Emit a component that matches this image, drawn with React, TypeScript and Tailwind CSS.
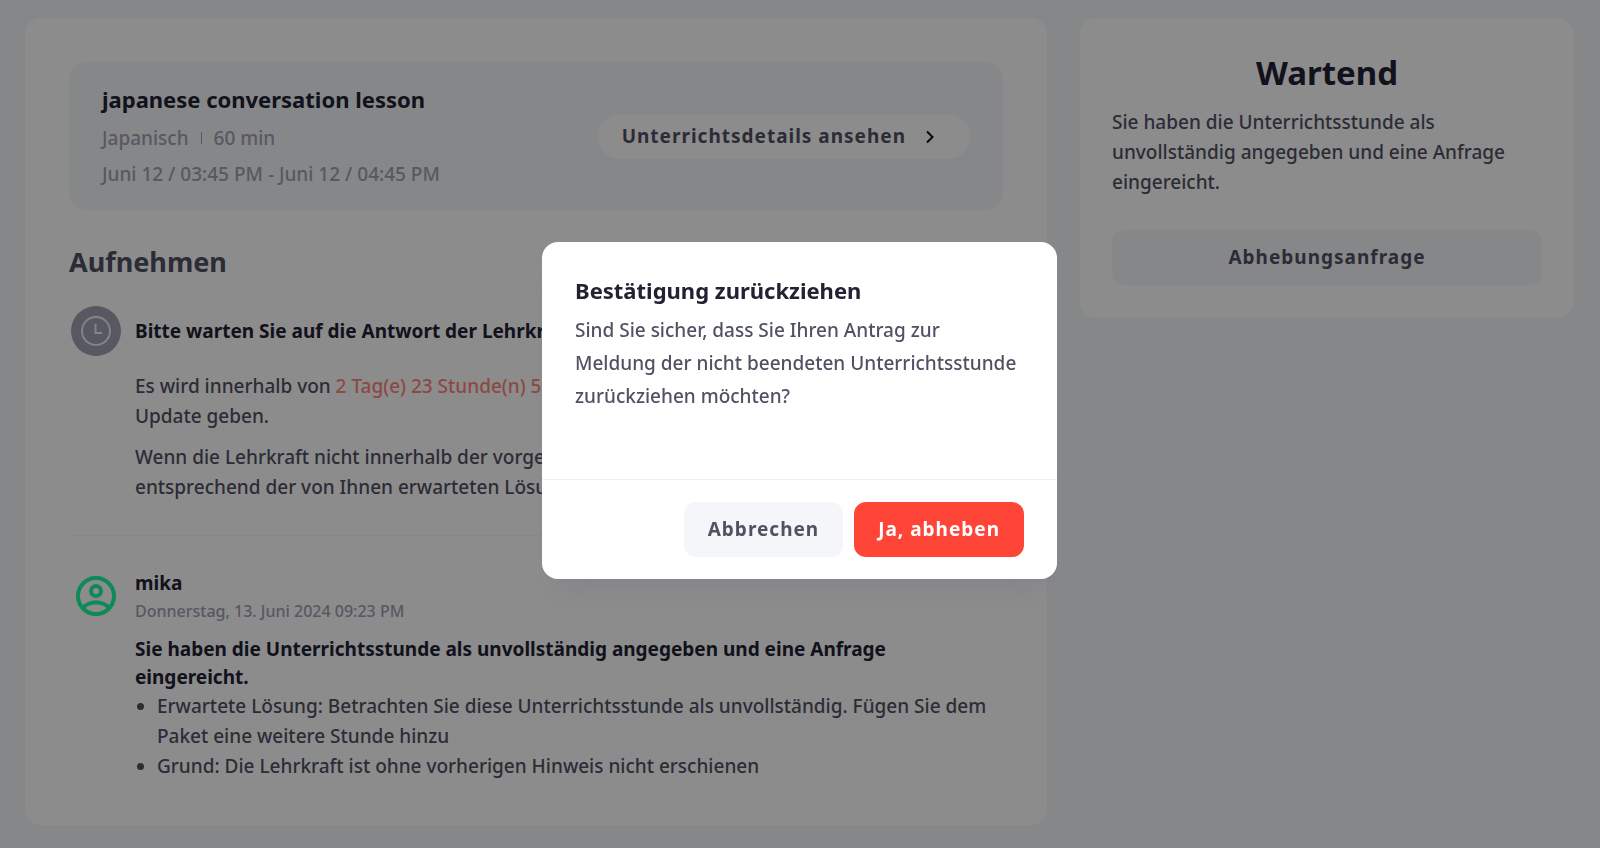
import { useState } from 'react';

const findings = [
  'Erwartete Lösung: Betrachten Sie diese Unterrichtsstunde als unvollständig. Fügen Sie dem Paket eine weitere Stunde hinzu',
  'Grund: Die Lehrkraft ist ohne vorherigen Hinweis nicht erschienen',
];

function ClockBadge() {
  return (
    <svg viewBox="0 0 50 50" className="w-[50px] h-[50px]" fill="none" aria-hidden="true">
      <circle cx="25" cy="25" r="25" fill="#a0a0b2" />
      <circle cx="25" cy="25" r="14" stroke="#f0f0f4" strokeWidth="2" />
      <path d="M24.500 18V27H31" stroke="#f0f0f4" strokeWidth="2" />
    </svg>
  );
}

function UserIcon() {
  return (
    <svg viewBox="0 0 40 40" className="w-10 h-10" fill="none" stroke="#1dfaa0" strokeWidth="4" aria-hidden="true">
      <circle cx="20" cy="20" r="18" />
      <circle cx="20" cy="15" r="5" />
      <path d="M7 31.5C10.500 28 15 26.500 20 26.500S29.500 28 33 31.500" />
    </svg>
  );
}

function ChevronIcon() {
  return (
    <svg viewBox="0 0 24 24" className="w-6 h-6" fill="none" stroke="#101018" strokeWidth="2" aria-hidden="true">
      <path d="M9 6.500L14.500 12L9 17.500" />
    </svg>
  );
}

function LessonCard() {
  return (
    <div className="flex items-center justify-between bg-[#f5f6fa] rounded-2xl px-[33px] pt-[19px] pb-[18px]">
      <div className="text-[#a0a0b2]">
        <h1 className="text-[22px] leading-9 font-bold text-[#222233]">japanese conversation lesson</h1>
        <p className="flex items-center mt-[3px] text-[19px] leading-9 font-medium">
          Japanisch
          <span className="w-px h-3 mx-3 bg-[#a0a0b2]" />
          60 min
        </p>
        <p className="text-[19px] leading-9 font-medium">Juni 12 / 03:45 PM - Juni 12 / 04:45 PM</p>
      </div>
      <button className="flex items-center gap-3 h-11 pl-6 pr-7 bg-white rounded-full text-[19px] font-bold tracking-[1px]">
        Unterrichtsdetails ansehen
        <ChevronIcon />
      </button>
    </div>
  );
}

function StatusCard({ onWithdraw }: { onWithdraw: () => void }) {
  return (
    <aside className="bg-white rounded-2xl px-8 pt-8 pb-[33px]">
      <h2 className="text-[33px] leading-[46px] font-bold text-center text-[#222233]">Wartend</h2>
      <p className="mt-[11px] text-[19px] leading-[30px] font-medium">
        Sie haben die Unterrichtsstunde als unvollständig angegeben und eine Anfrage eingereicht.
      </p>
      <button
        onClick={onWithdraw}
        className="w-full h-[55px] mt-[33px] bg-[#f5f6fa] rounded-xl text-[19px] font-bold tracking-[1px]"
      >
        Abhebungsanfrage
      </button>
    </aside>
  );
}

function ConfirmModal({ onClose }: { onClose: () => void }) {
  return (
    <div className="fixed inset-0 flex justify-center items-start pt-[242px] pr-px bg-black/45">
      <div
        role="dialog"
        aria-modal="true"
        aria-labelledby="confirm-title"
        className="w-[515px] bg-white rounded-2xl shadow-[0_24px_24px_-16px_rgba(100,105,140,0.25)]"
      >
        <div className="px-[33px] pt-[30px] pb-[66px]">
          <h2 id="confirm-title" className="text-[22px] leading-9 font-bold text-[#222233]">
            Bestätigung zurückziehen
          </h2>
          <p className="mt-1.5 text-[19px] leading-[33px] font-medium">
            Sind Sie sicher, dass Sie Ihren Antrag zur Meldung der nicht beendeten Unterrichtsstunde zurückziehen
            möchten?
          </p>
        </div>
        <div className="flex justify-end gap-[11px] px-[33px] py-[22px] border-t border-[#f0f0f2]">
          <button onClick={onClose} className="h-[55px] px-6 bg-[#f5f6fa] rounded-xl text-[19px] font-bold tracking-[1px]">
            Abbrechen
          </button>
          <button
            onClick={onClose}
            className="h-[55px] px-6 bg-[#ff4438] rounded-xl text-[19px] font-bold tracking-[1px] text-white"
          >
            Ja, abheben
          </button>
        </div>
      </div>
    </div>
  );
}

export default function App() {
  const [showModal, setShowModal] = useState(true);

  return (
    <div className="min-h-screen bg-[#f5f6fa] text-[#515164] font-['Noto_Sans',sans-serif]">
      <div className="grid grid-cols-[1022fr_494fr] items-start gap-[33px] pl-[25px] pr-[26px] pt-[18px] pb-6">
        <main className="bg-white rounded-2xl p-11">
          <LessonCard />

          <h2 className="mt-[31px] text-[27px] leading-[42px] font-bold">Aufnehmen</h2>

          {/* Current status */}
          <section className="grid grid-cols-[54px_1fr] gap-x-3 mt-[23px] pb-[33px] border-b border-[#f5f6fa]">
            <div className="flex justify-center">
              <ClockBadge />
            </div>
            <h3 className="self-center text-[19px] leading-7 font-bold text-[#222233]">
              Bitte warten Sie auf die Antwort der Lehrkraft
            </h3>
            <div className="col-start-2 mt-[15px] text-[19px] leading-[30px] font-medium">
              <p>
                Es wird innerhalb von <span className="text-[#ff857d]">2 Tag(e) 23 Stunde(n) 59 Minute(n)</span> ein
                <br />
                Update geben.
              </p>
              <p className="mt-[11px]">
                Wenn die Lehrkraft nicht innerhalb der vorgegebenen Zeit reagiert, wird
                <br />
                entsprechend der von Ihnen erwarteten Lösung verfahren.
              </p>
            </div>
          </section>

          {/* History */}
          <section className="grid grid-cols-[54px_1fr] gap-x-3 mt-[33px]">
            <div className="flex justify-center pt-[7px]">
              <UserIcon />
            </div>
            <div>
              <h3 className="text-[19px] leading-7 font-bold text-[#222233]">mika</h3>
              <p className="text-base leading-7 font-medium text-[#a0a0b2]">Donnerstag, 13. Juni 2024 09:23 PM</p>
              <p className="mt-2.5 text-[19px] leading-7 font-bold text-[#222233]">
                Sie haben die Unterrichtsstunde als unvollständig angegeben und eine Anfrage eingereicht.
              </p>
              <ul className="list-disc pl-[22px] text-[19px] leading-[30px] font-medium">
                {findings.map((text) => (
                  <li key={text}>{text}</li>
                ))}
              </ul>
            </div>
          </section>
        </main>

        <StatusCard onWithdraw={() => setShowModal(true)} />
      </div>

      {showModal && <ConfirmModal onClose={() => setShowModal(false)} />}
    </div>
  );
}
